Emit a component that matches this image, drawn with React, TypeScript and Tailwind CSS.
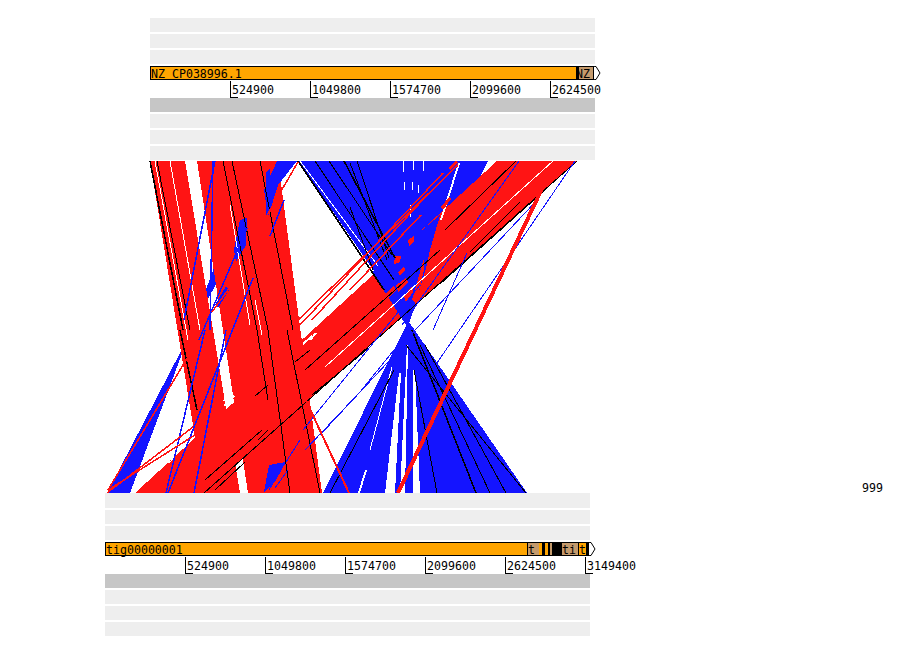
import React from 'react';

const MONO = "font-['DejaVu_Sans_Mono',monospace]";

const TOP = 161;
const BOTTOM = 493;
const LEFT = 100;

const RED = '#ff1414';
const BLUE = '#1414ff';

type Line = [number, number, number, number, number?];

// blue hits drawn first, the big one is twisted and crosses at about (406, 320)
const blueBands: number[][] = [
    [298, 161, 488, 161, 323, 493, 527, 493],
    [254, 161, 280, 161, 107, 493, 130, 493],
];

const redBands: number[][] = [
    [150, 161, 185, 161, 240, 493, 204, 493],
    [197, 161, 278, 161, 322, 493, 248, 493],
    [497, 161, 577, 161, 204, 493, 135, 493],
];

const whiteSlits: number[][] = [
    [458, 163, 460, 163, 442, 220, 440, 220],
    [407, 345, 408, 345, 405, 493, 400, 493],
    [413, 370, 415, 370, 420, 493, 413, 493],
    [399, 373, 401, 373, 395, 493, 385, 493],
    [365, 470, 367, 470, 360, 493, 358, 493],
];

const blueShapes: number[][] = [
    [277, 161, 297, 161, 278, 185, 268, 217, 264, 190],
    [266, 172, 270, 168, 272, 205, 266, 218],
    [240, 220, 247, 218, 246, 245, 236, 262, 234, 250],
    [229, 290, 226, 286, 215, 305, 218, 308],
    [269, 465, 286, 462, 276, 480, 264, 492],
    // where the blue hits lie on top of the red band
    [372, 272, 440, 215, 428, 262, 408, 327, 404, 322],
];

const redShapes: number[][] = [
    [441, 207, 449, 197, 451, 199, 443, 210],
    [452, 218, 462, 208, 464, 211, 454, 222],
    [448, 168, 456, 161, 458, 163, 450, 170],
    [430, 250, 438, 222, 440, 230, 428, 275, 420, 295],
    [412, 300, 424, 258, 424, 270, 416, 304],
    [395, 256, 401, 256, 400, 262, 394, 264],
    [398, 272, 404, 266, 405, 270, 400, 276],
    [396, 285, 406, 278, 408, 282, 398, 292],
    [404, 296, 412, 286, 413, 292, 406, 302],
    [384, 295, 394, 286, 396, 290, 386, 300],
    [408, 240, 414, 236, 414, 242, 409, 246],
];

const whiteLines: Line[] = [
    [553, 161, 325, 367, 1],
    [155, 161, 188, 340, 1],
    [170, 161, 200, 330, 1],
    [230, 205, 250, 325, 1],
    [255, 300, 262, 335, 1],
    [392, 367, 370, 450, 1],
    [403, 161, 403, 172, 1],
    [404, 182, 404, 190, 1],
    [413, 161, 413, 170, 1],
    [412, 182, 412, 190, 1],
    [411, 205, 410, 217, 1],
    [423, 161, 423, 171, 1],
    [419, 185, 418, 193, 1],
    [300, 161, 378, 266, 1],
    [310, 340, 316, 333, 2],
    [303, 344, 312, 336, 2],
    [224, 406, 234, 396, 2],
    [224, 401, 232, 392, 2],
    [175, 458, 168, 463, 1],
];

const blackLines: Line[] = [
    [150, 161, 183, 330, 1.5],
    [180, 330, 197, 410, 1.5],
    [157, 161, 190, 330, 1],
    [223, 161, 257, 330, 1],
    [257, 330, 268, 400, 1],
    [232, 161, 268, 330, 1],
    [268, 330, 290, 493, 1],
    [260, 161, 293, 330, 1],
    [287, 330, 320, 493, 1],
    [298, 161, 384, 290, 1.5],
    [315, 161, 394, 280, 1],
    [329, 161, 392, 255, 1],
    [344, 161, 395, 258, 1.5],
    [350, 163, 387, 260, 1],
    [357, 161, 389, 258, 1],
    [350, 207, 373, 270, 1],
    [577, 161, 204, 493, 1],
    [516, 161, 445, 230, 1],
    [520, 202, 470, 252, 1],
    [545, 190, 440, 284, 1],
    [440, 250, 305, 370, 1],
    [370, 347, 312, 395, 1],
    [262, 430, 205, 480, 1],
    [295, 362, 310, 350, 1],
    [268, 385, 255, 396, 1],
    [268, 430, 258, 440, 1],
    [245, 462, 215, 490, 1],
    [412, 330, 476, 493, 1.5],
    [420, 345, 490, 493, 1],
    [425, 345, 506, 493, 1],
    [414, 370, 437, 493, 1],
    [394, 370, 330, 493, 1],
    [406, 345, 526, 493, 1],
];

const blueLines: Line[] = [
    [215, 161, 184, 320, 1.5],
    [213, 161, 210, 330, 1.5],
    [247, 228, 199, 340, 1.5],
    [253, 278, 168, 493, 1.5],
    [205, 330, 166, 493, 1.5],
    [226, 330, 194, 493, 1.5],
    [284, 200, 270, 236, 1.5],
    [575, 161, 437, 363],
    [540, 197, 403, 343],
    [519, 161, 402, 325],
    [303, 430, 420, 285],
    [305, 450, 360, 392],
    [320, 435, 388, 362],
    [360, 392, 398, 345],
    [467, 253, 433, 330],
    [286, 462, 300, 440],
    [269, 490, 285, 463],
    [275, 488, 288, 470],
];

const redLines: Line[] = [
    [555, 161, 398, 493, 4],
    [298, 162, 266, 217, 1.5],
    [230, 287, 212, 312, 1.5],
    [458, 165, 298, 320, 1.5],
    [443, 173, 300, 325, 1.5],
    [430, 192, 312, 320, 1.5],
    [421, 215, 350, 290, 1.5],
    [193, 427, 107, 493, 1.5],
    [195, 435, 108, 490, 1.5],
    [304, 396, 349, 493, 2],
    [198, 340, 108, 490, 1.5],
];

const polygon = (points: number[]) => {
    const pairs: string[] = [];
    for (let i = 0; i < points.length; i += 2) {
        pairs.push(`${points[i] - LEFT},${points[i + 1] - TOP}`);
    }
    return pairs.join(' ');
};

const Lines: React.FC<{ items: Line[]; color: string }> = ({items, color}) => (
    <>
        {items.map(([x1, y1, x2, y2, width], index) => (
            <line
                key={index}
                x1={x1 - LEFT}
                y1={y1 - TOP}
                x2={x2 - LEFT}
                y2={y2 - TOP}
                stroke={color}
                strokeWidth={width ?? 1}
            />
        ))}
    </>
);

const Shapes: React.FC<{ items: number[][]; color: string }> = ({items, color}) => (
    <>
        {items.map((points, index) => (
            <polygon key={index} points={polygon(points)} fill={color}/>
        ))}
    </>
);

const Ribbons: React.FC = () => (
    <svg width={500} height={BOTTOM - TOP} shapeRendering="crispEdges" className="block shrink-0">
        <Shapes items={blueBands} color={BLUE}/>
        <Shapes items={redBands} color={RED}/>
        <Shapes items={whiteSlits} color="#ffffff"/>
        <Shapes items={blueShapes} color={BLUE}/>
        <Shapes items={redShapes} color={RED}/>
        <Lines items={whiteLines} color="#ffffff"/>
        <Lines items={blackLines} color="#000000"/>
        <Lines items={blueLines} color={BLUE}/>
        <Lines items={redLines} color={RED}/>
    </svg>
);

const Row: React.FC<{ dark?: boolean; tall?: boolean }> = ({dark, tall}) => (
    <div className={`${tall ? 'h-[15px]' : 'h-[14px]'} ${dark ? 'bg-[#c6c6c6]' : 'bg-[#eeeeee]'}`}/>
);

const Tick: React.FC<{ label: string }> = ({label}) => (
    <div className="flex w-20 shrink-0">
        <div className="mt-px h-[17px] w-2 shrink-0 -mr-[6px] border-b border-l border-black"/>
        <span className="mt-[3px] whitespace-nowrap text-[11.6px] leading-[15px] text-black">{label}</span>
    </div>
);

const Arrow: React.FC = () => (
    <svg width={7} height={14} className="shrink-0 -mr-[6px] -my-px">
        <path d="M0.5 0.5 L2 0.5 L6 7 L2 13.5 L0.5 13.5" fill="#ffffff" stroke="#000000"/>
    </svg>
);

const Segment: React.FC<{ width: string; color: string; label?: string }> = ({width, color, label}) => (
    <div className={`shrink-0 whitespace-nowrap text-[11.6px] leading-[14px] text-black ${width} ${color}`}>
        {label}
    </div>
);

const Track: React.FC<{
    className: string;
    tallFirst?: boolean;
    bar: React.ReactNode;
    ticks: string[];
}> = ({className, tallFirst, bar, ticks}) => (
    <div className={`flex flex-col ${className}`}>
        <div className="flex flex-col gap-[2px]">
            <Row tall={tallFirst}/>
            <Row/>
            <Row/>
            <div className="flex h-[14px] items-stretch border-y border-l border-black">{bar}</div>
        </div>
        <div className="flex h-[18px] pl-20">
            {ticks.map((tick) => (
                <Tick key={tick} label={tick}/>
            ))}
        </div>
        <div className="flex flex-col gap-[2px]">
            <Row dark/>
            <Row/>
            <Row/>
            <Row/>
        </div>
    </div>
);

export default function App() {
    return (
        <div className={`h-[654px] w-[900px] overflow-hidden bg-white pt-[18px] ${MONO}`}>
            <Track
                className="ml-[150px] w-[445px]"
                ticks={['524900', '1049800', '1574700', '2099600', '2624500']}
                bar={
                    <>
                        <div className="flex-1 whitespace-nowrap bg-[#ffa500] text-[11.6px] leading-[14px] text-black">
                            NZ CP038996.1
                        </div>
                        <Segment width="w-[3px]" color="bg-black"/>
                        <div className="w-[15px] shrink-0 border-r border-black bg-[#c49a6c] text-[11.6px] leading-[14px] text-black">
                            <span className="-ml-[3px]">NZ</span>
                        </div>
                        <Arrow/>
                    </>
                }
            />
            <div className="flex h-[332px] mt-px pl-[100px]">
                <Ribbons/>
                <span className="ml-[262px] mt-[320px] h-[15px] text-[11.6px] leading-[15px] text-black">999</span>
            </div>
            <Track
                className="ml-[105px] w-[485px]"
                tallFirst
                ticks={['524900', '1049800', '1574700', '2099600', '2624500', '3149400']}
                bar={
                    <>
                        <div className="flex-1 whitespace-nowrap bg-[#ffa500] text-[11.6px] leading-[14px] text-black">
                            tig00000001
                        </div>
                        <Segment width="w-px" color="bg-black"/>
                        <Segment width="w-[11px]" color="bg-[#c49a6c]" label="t"/>
                        <Segment width="w-[3px]" color="bg-[#ffa500]"/>
                        <Segment width="w-[3px]" color="bg-black"/>
                        <Segment width="w-[3px]" color="bg-[#ffa500]"/>
                        <Segment width="w-[2px]" color="bg-black"/>
                        <Segment width="w-[2px]" color="bg-[#c49a6c]"/>
                        <Segment width="w-[10px]" color="bg-black"/>
                        <Segment width="w-[16px]" color="bg-[#c49a6c]" label="ti"/>
                        <Segment width="w-px" color="bg-black"/>
                        <Segment width="w-[7px]" color="bg-[#ffa500]" label="t"/>
                        <Segment width="w-[3px]" color="bg-black"/>
                        <Arrow/>
                    </>
                }
            />
        </div>
    );
}
